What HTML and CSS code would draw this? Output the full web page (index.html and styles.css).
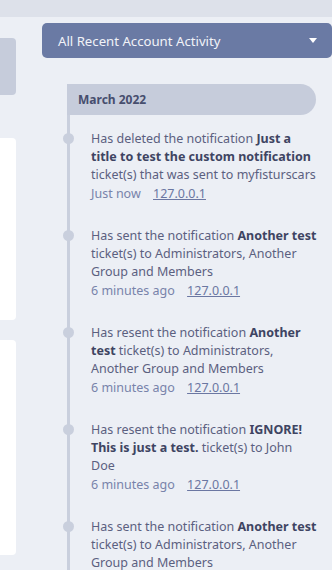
FILE: index.html
```html
<!DOCTYPE html>
<html lang="en">
<head>
    <meta charset="UTF-8">
    <meta name="viewport" content="width=device-width, initial-scale=1.0">
    <title>Recent Account Activity</title>
    <link rel="stylesheet" href="styles.css">
</head>
<body>
    <div class="topbar"></div>

    <div class="layout">
        <div class="side">
            <div class="side-tab"></div>
            <div class="side-card first"></div>
            <div class="side-card second"></div>
        </div>

        <div class="main">
            <div class="activity-select">
                <span>All Recent Account Activity</span>
                <span class="caret"></span>
            </div>

            <div class="timeline">
                <div class="month">March 2022</div>

                <div class="entry">
                    <p>Has deleted the notification <b>Just a title to test the custom notification</b> ticket(s) that was sent to myfisturscars</p>
                    <div class="meta">Just now <a href="#">127.0.0.1</a></div>
                </div>

                <div class="entry">
                    <p>Has sent the notification <b>Another test</b> ticket(s) to Administrators, Another Group and Members</p>
                    <div class="meta">6 minutes ago <a href="#">127.0.0.1</a></div>
                </div>

                <div class="entry">
                    <p>Has resent the notification <b>Another test</b> ticket(s) to Administrators, Another Group and Members</p>
                    <div class="meta">6 minutes ago <a href="#">127.0.0.1</a></div>
                </div>

                <div class="entry">
                    <p>Has resent the notification <b>IGNORE! This is just a test.</b> ticket(s) to John Doe</p>
                    <div class="meta">6 minutes ago <a href="#">127.0.0.1</a></div>
                </div>

                <div class="entry">
                    <p>Has sent the notification <b>Another test</b> ticket(s) to Administrators, Another Group and Members</p>
                    <div class="meta">6 minutes ago <a href="#">127.0.0.1</a></div>
                </div>
            </div>
        </div>
    </div>
</body>
</html>
```

FILE: styles.css
```css
body {
    margin: 0;
    background-color: #eceff5;
    font-family: "Noto Sans", "Open Sans", sans-serif;
    font-size: 12px;
    color: #5b6080;
    overflow: hidden;
}
.topbar {
    height: 17px;
    background-color: #dde1ea;
}
.layout {
    display: flex;
    gap: 26px;
}
.side {
    width: 16px;
    flex-shrink: 0;
}
.side-tab {
    margin-top: 21px;
    height: 57px;
    background-color: #c6ccdb;
    border-radius: 0 4px 4px 0;
}
.side-card {
    background-color: #fff;
    border-radius: 0 4px 4px 0;
}
.side-card.first {
    margin-top: 43px;
    height: 182px;
}
.side-card.second {
    margin-top: 20px;
    height: 215px;
}
.main {
    flex: 1;
}
.activity-select {
    margin-top: 6px;
    height: 35px;
    display: flex;
    align-items: center;
    justify-content: space-between;
    padding: 0 15px 0 16px;
    background-color: #6a7aa4;
    border-radius: 5px;
    color: #f1f3f8;
    font-size: 13.2px;
}
.caret {
    width: 0;
    height: 0;
    border-left: 4px solid transparent;
    border-right: 4px solid transparent;
    border-top: 5px solid #fff;
}
.timeline {
    margin: 26px 0 0 25px;
    border-left: 3px solid #c9cfdd;
    height: 600px;
}
.month {
    margin-left: -3px;
    width: 238px;
    height: 31px;
    line-height: 31px;
    padding-left: 11px;
    background-color: #c6ccdb;
    border-radius: 0 16px 16px 0;
    font-weight: bold;
    color: #474e6e;
}
.entry {
    position: relative;
    padding: 0 14px 24px 21px;
    font-size: 12.5px;
    line-height: 18px;
}
.month + .entry {
    margin-top: 15px;
}
.entry::before {
    content: "";
    position: absolute;
    left: -7px;
    top: 3px;
    width: 11px;
    height: 11px;
    border-radius: 50%;
    background-color: #c9cfdd;
}
.entry p {
    margin: 0;
}
.entry b {
    color: #3e4462;
}
.meta {
    margin-top: 1px;
    color: #7883aa;
}
.meta a {
    margin-left: 9px;
    color: #6b77a2;
}
```
